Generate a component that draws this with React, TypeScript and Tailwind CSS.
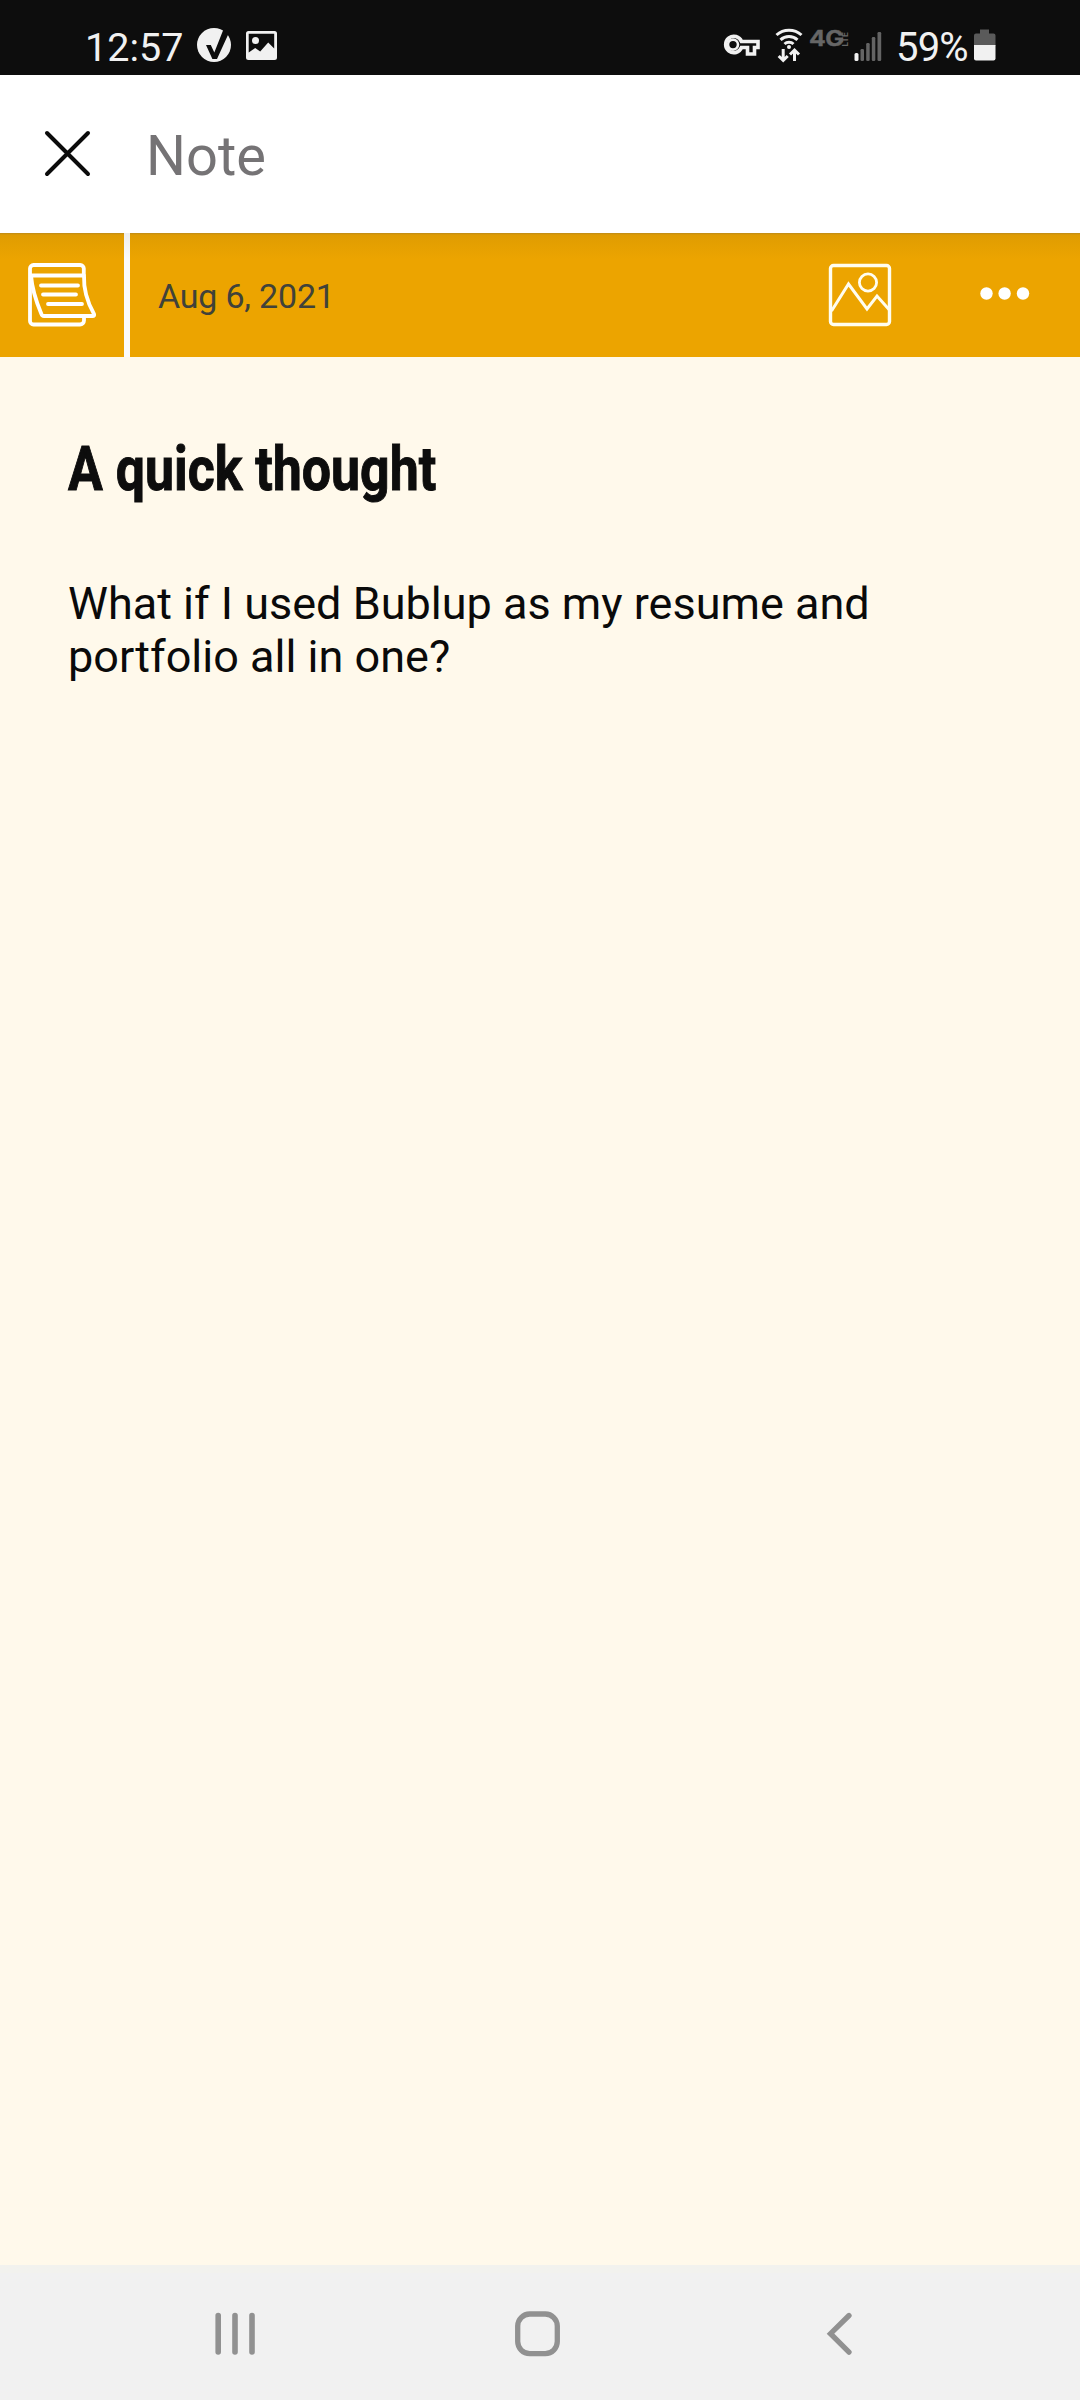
import type { ReactNode } from "react";

function StatusBar() {
  return (
    <div className="h-[75px] bg-[#0d0d0d] text-[#f1f1f1] flex items-start pl-[85px] pr-[84px] pt-[23px]">
      <span className="text-[39.500px] leading-[47px] w-[111px] mt-[1px]">12:57</span>
      <svg className="mt-[4px]" width="36" height="36" viewBox="196 27 36 36">
        <circle cx="214" cy="45" r="17" fill="#f1f1f1" />
        <path d="M206 45h4.800l3.500 7.500 9.700-24.500 6 2.500L217 59h-4.600z" fill="#0d0d0d" />
      </svg>
      <svg className="ml-[13px] mt-[7px]" width="33" height="31" viewBox="245 30 33 31">
        <path
          fillRule="evenodd"
          fill="#f1f1f1"
          d="M248.500 31h26a2.500 2.500 0 0 1 2.500 2.500v24a2.500 2.500 0 0 1-2.500 2.500h-26a2.500 2.500 0 0 1-2.500-2.500v-24a2.500 2.500 0 0 1 2.500-2.500zM248.700 33.800V52.500l6.500-4.500 5 3.500 8-9 6 6V33.800z"
        />
        <circle cx="255.500" cy="40.500" r="3.500" fill="#f1f1f1" />
      </svg>

      <div className="ml-auto flex items-start">
        <svg className="mt-[10px]" width="38" height="24" viewBox="722 33 38 24">
          <path
            d="M741.500 41.500h16.500v6h-3.500v6.500h-7v-6.500h-6a8.200 8.200 0 1 1 0-6z"
            fill="none"
            stroke="#f1f1f1"
            strokeWidth="3.600"
          />
          <circle cx="733" cy="44.600" r="5" fill="none" stroke="#f1f1f1" strokeWidth="2.600" />
        </svg>
        <svg className="ml-[15px] mt-[4px]" width="29" height="37" viewBox="775 27 29 37">
          <g fill="none" stroke="#f1f1f1" strokeWidth="3">
            <path d="M776.500 35a18.500 18.500 0 0 1 25 0" />
            <path d="M780.500 39.800a12.500 12.500 0 0 1 17 0" />
            <path d="M784.500 44a6.500 6.500 0 0 1 9 0" />
            <path d="M783.200 49v11M778.700 56l4.500 4.500 4.500-4.500M794.500 61V50M790 54.500l4.500-4.500 4.500 4.500" />
          </g>
          <circle cx="789" cy="47" r="2" fill="#f1f1f1" />
        </svg>
        <div className="ml-[5px] mt-[7px] w-[40px] h-[18px] flex items-center text-[#666666] font-bold">
          <span className="w-[32px] origin-left scale-x-[1.18] font-[Inter] text-[21px] leading-[18px] tracking-[-0.5px] [-webkit-text-stroke:0.4px_#666666]">
            4G
          </span>
          <span className="rotate-180 [writing-mode:vertical-rl] font-[Inter] text-[8px] leading-[8px] tracking-[0.2px]">
            LTE
          </span>
        </div>
        <svg className="ml-[4px] mt-[8px]" width="30" height="31" viewBox="853 31 30 31">
          <rect x="854.500" y="53" width="4" height="8" rx="1.500" fill="#f1f1f1" />
          <g fill="#646464">
            <rect x="860.500" y="49" width="3.500" height="12" rx="1.200" />
            <rect x="866.200" y="43" width="3.500" height="18" rx="1.200" />
            <rect x="871.800" y="37" width="3.500" height="24" rx="1.200" />
            <rect x="877.500" y="32" width="3.700" height="29" rx="1.200" />
          </g>
        </svg>
        <span className="text-[40px] leading-[47px] w-[77px] ml-[13px] mt-[1px] tracking-[-0.800px]">59%</span>
        <svg className="ml-[1px] mt-[6px]" width="22" height="32" viewBox="974 29 22 32">
          <path d="M980 29.500h9v4h4.500a2 2 0 0 1 2 2V46H974V35.500a2 2 0 0 1 2-2h4z" fill="#5a5a5a" />
          <path d="M974 45h21.500v13.500a2 2 0 0 1-2 2H976a2 2 0 0 1-2-2z" fill="#f1f1f1" />
        </svg>
      </div>
    </div>
  );
}

function Header() {
  return (
    <header className="h-[158px] bg-white flex items-center">
      <button className="ml-[43px]">
        <svg width="50" height="50" viewBox="43 129 50 50">
          <path
            d="M47 133l41 41M88 133l-41 41"
            stroke="#0b0b0b"
            strokeWidth="4"
            strokeLinecap="round"
          />
        </svg>
      </button>
      <h1 className="ml-[53px] mt-[4px] text-[56px] leading-[66px] text-[#757375]">Note</h1>
    </header>
  );
}

function NoteIcon() {
  return (
    <svg width="70" height="66" viewBox="27 262 70 66" fill="none" stroke="#fff" strokeWidth="3.800" strokeLinecap="round" strokeLinejoin="round">
      <path d="M83.800 275V268.500a3.500 3.500 0 0 0-3.500-3.500H33.500a3.500 3.500 0 0 0-3.500 3.500V321a3.500 3.500 0 0 0 3.500 3.500H80a4 4 0 0 0 4-4V317" />
      <path d="M31 275.500h53c-.5 14 3.500 27 10 38.500q.8 2-1.500 2H44q-2 0-2.600-2C35.500 300 32 288 31 275.500" />
      <path d="M41 285.500h37M43 294.500h33M48 304h34" />
    </svg>
  );
}

function ToolBar() {
  return (
    <div className="h-[124px] bg-[#eca400] bg-[linear-gradient(to_bottom,#bd8b18_0px,#df9c02_2px,#e49f01_10px,#eca400_26px)] flex">
      <div className="w-[124px] pl-[27px] flex items-center">
        <NoteIcon />
      </div>
      <div className="w-[6px] bg-[linear-gradient(to_bottom,#eeeeee_0px,#fbfbfb_26px)]" />
      <div className="flex-1 flex items-center">
        <span className="ml-[28px] mt-[1px] text-[34px] leading-[40px] tracking-[-0.200px] text-[#40423a]">
          Aug 6, 2021
        </span>
        <button className="ml-auto">
          <svg width="64" height="64" viewBox="828 263 64 64" fill="none" stroke="#fffdf0">
            <rect x="830.500" y="265.500" width="59" height="59" rx="3" strokeWidth="3.400" />
            <path d="M831.500 311l17-27 18.500 25 10-13 12 13.500" strokeWidth="3" />
            <circle cx="868" cy="282.500" r="8.600" strokeWidth="2.800" />
          </svg>
        </button>
        <button className="ml-[87px] mr-[50px] mb-[2px]">
          <svg width="51" height="14" viewBox="979 287 51 14" fill="#fff">
            <circle cx="986.500" cy="293.500" r="6.200" />
            <circle cx="1004.600" cy="293.500" r="6.200" />
            <circle cx="1023" cy="293.500" r="6.200" />
          </svg>
        </button>
      </div>
    </div>
  );
}

function NavButton({ children }: { children: ReactNode }) {
  return <button className="flex items-center justify-center w-[60px] h-[60px]">{children}</button>;
}

function NavBar() {
  return (
    <nav className="h-[135px] bg-[#f1f1f1] border-t-[8px] border-[#f2f2ee] flex items-start justify-between pl-[205px] pr-[210px] pt-[31px]">
      <NavButton>
        <svg width="60" height="60" viewBox="205 2304 60 60" stroke="#919191" strokeWidth="5.600" strokeLinecap="round">
          <path d="M218.200 2315.500v36.500M235 2315.500v36.500M252 2315.500v36.500" />
        </svg>
      </NavButton>
      <NavButton>
        <svg width="60" height="60" viewBox="507.500 2304 60 60" fill="none" stroke="#919191" strokeWidth="5.300">
          <rect x="517.200" y="2314" width="39.600" height="39.600" rx="12" />
        </svg>
      </NavButton>
      <NavButton>
        <svg width="60" height="60" viewBox="810 2304 60 60" fill="none" stroke="#919191" strokeWidth="5.300" strokeLinecap="round">
          <path d="M849 2315.500l-18.500 18.200 18.500 18.500" />
        </svg>
      </NavButton>
    </nav>
  );
}

export default function App() {
  return (
    <div className="w-[1080px] h-[2400px] flex flex-col overflow-hidden bg-[#fff9eb] font-[Roboto,sans-serif]">
      <StatusBar />
      <Header />
      <ToolBar />
      <main className="flex-1 px-[68px] pt-[75px]">
        <h2 className="w-max origin-left scale-x-[0.836] text-[62px] leading-[73px] font-bold [-webkit-text-stroke:1px_#0d0d0d] text-[#0d0d0d]">
          A quick thought
        </h2>
        <p className="mt-[72px] w-[880px] text-[45px] leading-[53px] text-[#0a0a0a]">
          What if I used Bublup as my resume and
          <br />
          portfolio all in one?
        </p>
      </main>
      <NavBar />
    </div>
  );
}
